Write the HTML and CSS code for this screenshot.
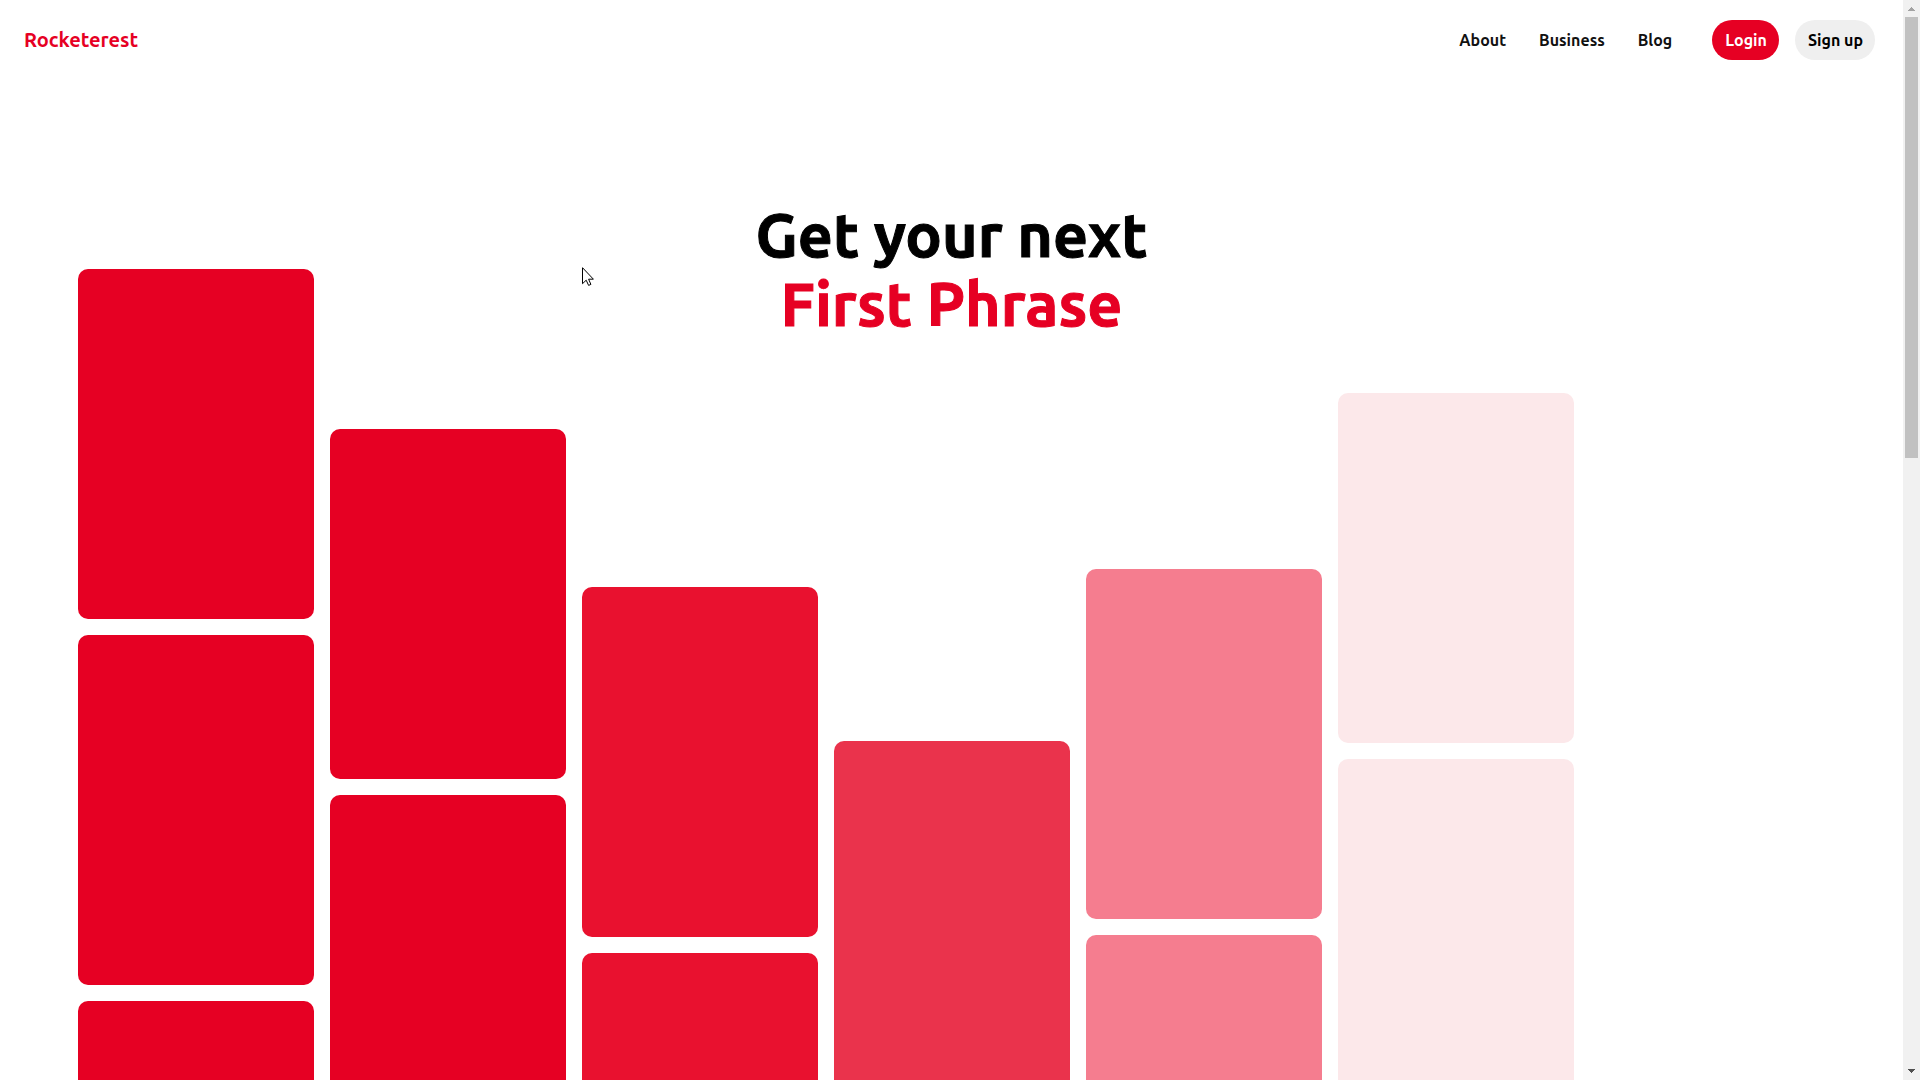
FILE: index.html
```html
<!DOCTYPE html>
<html lang="en">
<head>
<meta charset="utf-8">
<meta name="viewport" content="width=device-width, initial-scale=1">
<title>Rocketerest</title>
<link rel="stylesheet" href="styles.css">
</head>
<body>
<div class="page">
  <header class="header">
    <a class="brand" href="#">Rocketerest</a>
    <nav class="nav">
      <a class="nav-link" href="#">About</a>
      <a class="nav-link" href="#">Business</a>
      <a class="nav-link" href="#">Blog</a>
    </nav>
    <div class="actions">
      <button class="button button-primary" type="button">Login</button>
      <button class="button" type="button">Sign up</button>
    </div>
  </header>
  <main class="hero">
    <h1 class="title">Get your next<br><span class="phrase">First Phrase</span></h1>
    <div class="board">
      <div class="column column-1"><div class="card"></div><div class="card"></div><div class="card"></div></div>
      <div class="column column-2"><div class="card"></div><div class="card"></div><div class="card"></div></div>
      <div class="column column-3"><div class="card"></div><div class="card"></div><div class="card"></div></div>
      <div class="column column-4"><div class="card"></div><div class="card"></div></div>
      <div class="column column-5"><div class="card"></div><div class="card"></div></div>
      <div class="column column-6"><div class="card"></div><div class="card"></div></div>
    </div>
  </main>
</div>
<div class="scrollbar" aria-hidden="true">
  <svg class="arrow" width="17" height="17" viewBox="0 0 17 17" shape-rendering="crispEdges"><path fill="#a3a3a3" d="M8 7h1v1h1v1h1v1h1v1H5v-1h1V9h1V8h1z"/></svg>
  <div class="thumb"></div>
  <svg class="arrow" width="17" height="17" viewBox="0 0 17 17" shape-rendering="crispEdges"><path fill="#505050" d="M5 6h7v1h-1v1h-1v1H9v1H8V9H7V8H6V7H5z"/></svg>
</div>
<svg class="cursor" width="12" height="19" viewBox="0 0 12 19" aria-hidden="true"><path fill="#fff" stroke="#000" d="M.5.7v16l3.700-3.500 2.400 5.200 2.300-1-2.300-5.200h4.800z"/></svg>
</body>
</html>
```
FILE: styles.css
```css
* {
  box-sizing: border-box;
}

body {
  margin: 0;
  height: 100vh;
  display: flex;
  overflow: hidden;
  background: #fff;
  color: #000;
  font-family: Ubuntu, "Noto Sans", sans-serif;
  font-size: 16px;
}

.page {
  flex: 1;
  min-width: 0;
  overflow: hidden;
}

.header {
  display: flex;
  align-items: center;
  height: 80px;
  padding: 0 28px 0 24px;
}

.brand {
  margin-right: auto;
  color: #e60023;
  font-size: 20px;
  font-weight: 700;
  line-height: 24px;
  text-decoration: none;
}

.nav {
  display: flex;
  gap: 33px;
  margin-right: 40px;
}

.nav-link {
  color: #111;
  font-weight: 700;
  text-decoration: none;
}

.actions {
  display: flex;
  gap: 16px;
}

.button {
  height: 40px;
  padding: 0 12px 0 13px;
  border: 0;
  border-radius: 24px;
  background: #efefef;
  color: #000;
  font: inherit;
  font-weight: 700;
}

.button-primary {
  background: #e60023;
  color: #fff;
}

.hero {
  display: grid;
}

.title {
  grid-area: 1 / 1;
  margin: 120px 0 0;
  font-size: 61px;
  font-weight: 700;
  line-height: 69px;
  text-align: center;
  -webkit-text-stroke: 1px currentColor;
}

.phrase {
  color: #e60023;
}

.board {
  grid-area: 1 / 1;
  display: flex;
  gap: 16px;
  padding: 189px 78px 0;
}

.column {
  display: flex;
  flex-direction: column;
  gap: 16px;
  width: 236px;
}

.card {
  height: 350px;
  border-radius: 10px;
  background: #e60023;
}

.column-2 {
  margin-top: 160px;
}

.column-3 {
  margin-top: 318px;
}

.column-4 {
  margin-top: 472px;
}

.column-5 {
  margin-top: 300px;
}

.column-6 {
  margin-top: 124px;
}

.column-3 .card {
  background: #e9112f;
}

.column-4 .card {
  background: #ea334c;
}

.column-5 .card {
  background: #f57d8f;
}

.column-6 .card {
  background: #fce8ea;
}

.scrollbar {
  display: flex;
  flex-direction: column;
  justify-content: space-between;
  width: 17px;
  background: #f1f1f1;
}

.arrow {
  display: block;
}

.thumb {
  height: 441px;
  margin: 0 2px auto;
  background: #c1c1c1;
}

.cursor {
  position: absolute;
  left: 582px;
  top: 267px;
}
```
